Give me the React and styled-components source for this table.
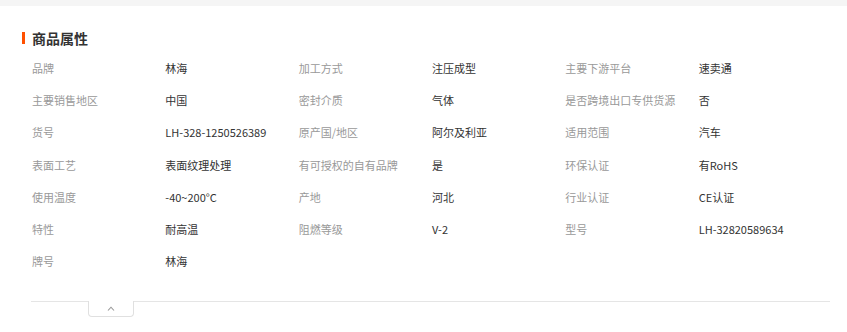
import React from "react";
import styled, { createGlobalStyle } from "styled-components";

const GlobalStyle = createGlobalStyle`
  body {
    margin: 0;
    background: #fff;
    font-family: "Noto Sans CJK SC", "Noto Sans", sans-serif;
    color: #333;
  }
`;

const attrs = [
  ["品牌", "林海"],
  ["加工方式", "注压成型"],
  ["主要下游平台", "速卖通"],
  ["主要销售地区", "中国"],
  ["密封介质", "气体"],
  ["是否跨境出口专供货源", "否"],
  ["货号", "LH-328-1250526389"],
  ["原产国/地区", "阿尔及利亚"],
  ["适用范围", "汽车"],
  ["表面工艺", "表面纹理处理"],
  ["有可授权的自有品牌", "是"],
  ["环保认证", "有RoHS"],
  ["使用温度", "-40~200°C"],
  ["产地", "河北"],
  ["行业认证", "CE认证"],
  ["特性", "耐高温"],
  ["阻燃等级", "V-2"],
  ["型号", "LH-32820589634"],
  ["牌号", "林海"],
];

const TopBand = styled.div`
  height: 6px;
  background: #f5f5f5;
`;

const Section = styled.section`
  padding: 22px 0 0 22px;
  width: 810px;
`;

const Title = styled.h3`
  margin: 0 0 4px;
  display: flex;
  align-items: center;
  gap: 7px;
  font-size: 14px;
  line-height: 20px;
  font-weight: 700;
  color: #333;

  &::before {
    content: "";
    width: 3px;
    height: 12px;
    background: #ff5000;
  }
`;

const Grid = styled.dl`
  margin: 0 0 0 10px;
  display: grid;
  grid-template-columns: repeat(6, 1fr);
  grid-auto-rows: 32.2px;
  width: 800px;
`;

const Cell = styled.div`
  margin: 0;
  font-size: 11px;
  line-height: 32px;
  white-space: nowrap;
  color: ${(p) => (p.$label ? "#999" : "#333")};
`;

const Footer = styled.div`
  display: flex;
  align-items: flex-start;
  margin: 24px 0 0 9px;
  width: 799px;
`;

const Rule = styled.div`
  height: 0;
  border-top: 1px solid #e5e5e5;
  flex: ${(p) => (p.$grow ? 1 : "none")};
  width: ${(p) => p.$w || "auto"};
`;

const Toggle = styled.button`
  width: 46px;
  height: 16px;
  padding: 0;
  border: 1px solid #e0e0e0;
  border-top: none;
  border-radius: 0 0 4px 4px;
  background: #fff;
  display: flex;
  align-items: center;
  justify-content: center;
  cursor: pointer;
`;

export default function App() {
  return (
    <>
      <GlobalStyle />
      <TopBand />
      <Section>
        <Title>商品属性</Title>
        <Grid>
          {attrs.map(([k, v]) => (
            <React.Fragment key={k}>
              <Cell as="dt" $label>{k}</Cell>
              <Cell as="dd">{v}</Cell>
            </React.Fragment>
          ))}
        </Grid>
        <Footer>
          <Rule $w="57px" />
          <Toggle aria-label="收起">
            <svg width="8" height="5" viewBox="0 0 8 5">
              <path d="M1 4.5L4 1.2 7 4.5" fill="none" stroke="#999" strokeWidth="1.1" />
            </svg>
          </Toggle>
          <Rule $grow />
        </Footer>
      </Section>
    </>
  );
}
